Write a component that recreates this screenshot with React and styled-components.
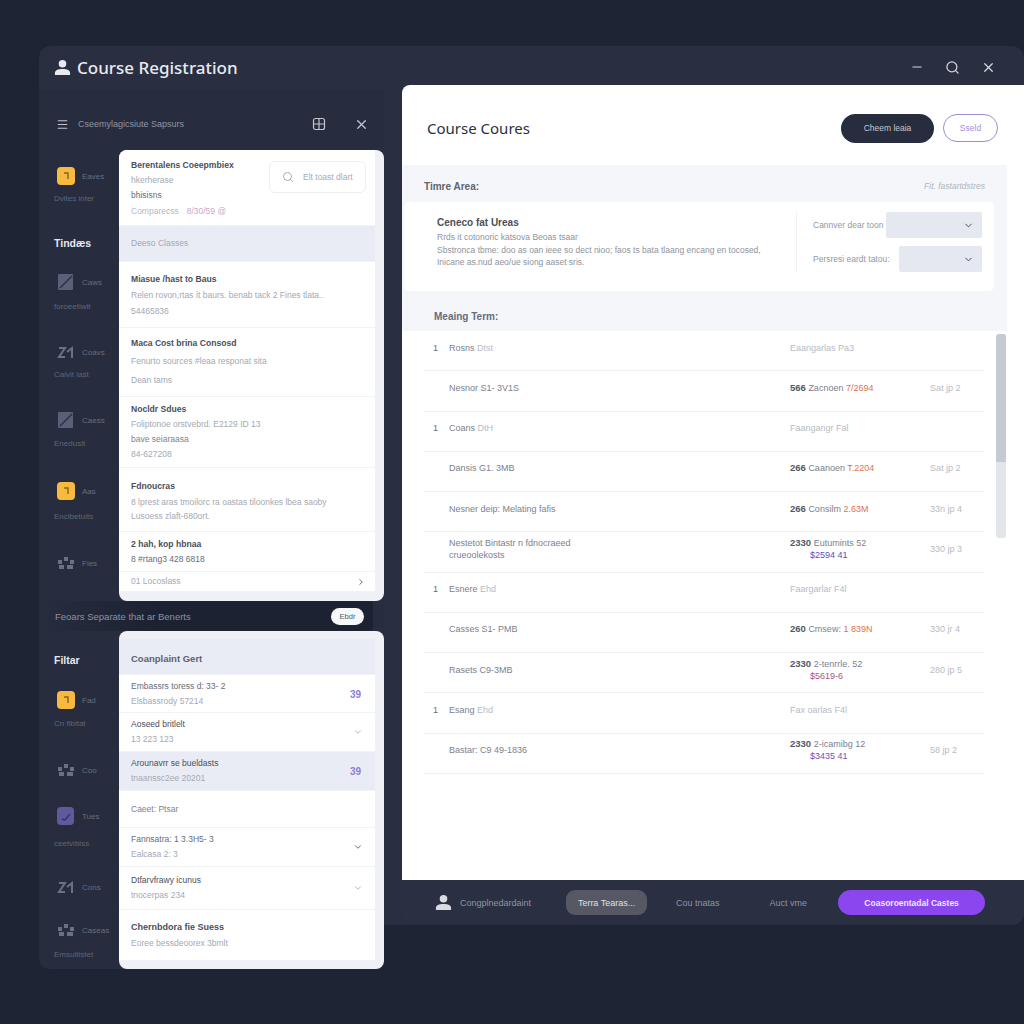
import React from "react";
import styled, { createGlobalStyle } from "styled-components";
import { ChevronDown, ChevronRight, Menu, Minus, Search, X } from "lucide-react";

const GlobalStyle = createGlobalStyle`
  html, body {
    margin: 0;
    background: #1f2434;
    font-family: "Liberation Sans", Arial, sans-serif;
  }
  * { box-sizing: border-box; }
`;

const Page = styled.div`
  width: 1024px;
  height: 1024px;
  padding: 46px 0 0 39px;
  overflow: hidden;
  background: #1f2434;
`;

const Header = styled.header`
  height: 44px;
  display: flex;
  align-items: center;
  padding: 0 28px 2px 15px;
  background: #292f41;
  border-radius: 12px 12px 0 0;
`;

const HeaderTitle = styled.h1`
  margin: 0 0 0 6px;
  flex: 1;
  font-family: "Noto Sans", sans-serif;
  font-size: 17px;
  font-weight: 500;
  color: #e8eaef;
`;

const HeaderTools = styled.div`
  display: flex;
  align-items: center;
  gap: 21px;
  color: #d5d8df;
`;

const Main = styled.div`
  display: flex;
  align-items: flex-start;
`;

/* left panel */
const Panel = styled.aside`
  width: 345px;
  height: 879px;
  flex: none;
  background: #272d3e;
  border-radius: 0 0 10px 10px;
`;

const PanelBar = styled.div`
  height: 60px;
  display: flex;
  align-items: center;
  padding: 8px 15px 0 17px;
  color: #c2c6cf;
`;

const PanelTitle = styled.span`
  flex: 1;
  margin-left: 9px;
  font-size: 9px;
  color: #8f95a4;
`;

const PanelTool = styled.span`
  display: flex;
  margin-left: 28px;
`;

const Section = styled.div`
  display: flex;
  height: ${(p) => p.$h}px;
`;

const Rail = styled.div`
  width: 80px;
  flex: none;
  padding-left: 15px;
`;

const RailHeading = styled.div`
  height: 14px;
  margin-top: ${(p) => p.$mt}px;
  font-size: 10.5px;
  line-height: 14px;
  font-weight: 700;
  color: #e6e8ee;
`;

const RailItem = styled.div`
  margin-top: ${(p) => p.$mt}px;
`;

const RailRow = styled.div`
  height: 18px;
  display: flex;
  align-items: center;
  gap: 7px;
  padding-left: 3px;
  font-size: 8px;
  color: #666d7e;
`;

const RailCaption = styled.div`
  height: 12px;
  margin-top: ${(p) => p.$gap}px;
  font-size: 8px;
  line-height: 12px;
  color: #5f6678;
`;

const Band = styled.div`
  width: 334px;
  height: 30px;
  display: flex;
  align-items: center;
  justify-content: space-between;
  padding: 0 9px 0 16px;
  background: linear-gradient(90deg, #272d3e 0%, #1d2232 35%, #1d2232 100%);
  border-radius: 0 4px 4px 0;
  font-size: 9.5px;
  color: #8b91a0;
`;

const BandButton = styled.button`
  width: 33px;
  height: 17px;
  padding: 0;
  border: 0;
  border-radius: 9px;
  background: #f7f8fa;
  color: #555b69;
  font: 7.5px "Liberation Sans", sans-serif;
`;

const Card = styled.div`
  width: 265px;
  height: ${(p) => p.$h}px;
  padding: ${(p) => p.$pad};
  background: #eff1f7;
  border-radius: 8px;
  overflow: hidden;
`;

const Row = styled.div`
  position: relative;
  height: ${(p) => p.$h}px;
  width: 256px;
  display: flex;
  flex-direction: column;
  justify-content: center;
  padding-left: 12px;
  background: ${(p) => (p.$tint ? "#e9ecf4" : "#fff")};
  border-bottom: 1px solid #f1f2f6;
`;

const CardTitle = styled.div`
  font-size: ${(p) => p.$size || 8.6}px;
  font-weight: 700;
  line-height: ${(p) => p.$lh || 15}px;
  color: #4a4f5c;
`;

const CardLine = styled.div`
  font-size: 8.5px;
  line-height: ${(p) => p.$lh || 15}px;
  color: ${(p) => p.$color || "#a3a9b4"};
`;

const SearchBox = styled.div`
  position: absolute;
  left: 150px;
  top: 11px;
  width: 97px;
  height: 32px;
  display: flex;
  align-items: center;
  gap: 9px;
  padding-left: 12px;
  background: #fff;
  border: 1px solid #eceef3;
  border-radius: 6px;
  font-size: 8.5px;
  color: #a5aab5;
`;

const PinkText = styled.span`
  margin-left: 8px;
  color: #c9a9c4;
`;

const BandTitle = styled.div`
  padding-top: 3px;
  font-size: 9.5px;
  font-weight: 700;
  color: #5c6270;
`;

const SideNote = styled.span`
  position: absolute;
  right: ${(p) => p.$right}px;
  top: 50%;
  transform: translateY(-50%);
  display: flex;
  color: #a5aab5;
  font-size: 10px;
  font-weight: 700;
`;

const PurpleNote = styled(SideNote)`
  color: #8f7dd6;
`;

/* right side */
const Right = styled.div`
  width: 640px;
  height: 840px;
  flex: none;
  margin-top: -5px;
  padding-left: 18px;
  background: #292f41;
  border-radius: 0 0 12px 0;
`;

const Sheet = styled.section`
  position: relative;
  height: 795px;
  background: #fff;
  border-radius: 8px 0 0 0;
`;

const SheetHead = styled.div`
  height: 80px;
  display: flex;
  align-items: center;
  padding: 6px 26px 0 25px;
`;

const SheetTitle = styled.h2`
  flex: 1;
  margin: 0;
  font-family: "Noto Sans", sans-serif;
  font-size: 15px;
  font-weight: 400;
  color: #2b3040;
`;

const DarkButton = styled.button`
  width: 93px;
  height: 29px;
  border: 0;
  border-radius: 15px;
  background: #272d3f;
  color: #c4c8d0;
  font: 8.5px "Liberation Sans", sans-serif;
`;

const OutlineButton = styled.button`
  width: 55px;
  height: 28px;
  margin-left: 9px;
  border: 1px solid #a08ad0;
  border-radius: 14px;
  background: #fff;
  color: #a88fd8;
  font: 8.5px "Liberation Sans", sans-serif;
`;

const Filters = styled.div`
  width: 605px;
  height: 166px;
  background: #f4f6fa;
`;

const FiltersHead = styled.div`
  height: 37px;
  display: flex;
  align-items: center;
  justify-content: space-between;
  padding: 5px 22px 0 22px;
`;

const FiltersLabel = styled.span`
  font-size: 10px;
  font-weight: 700;
  color: #5e6472;
`;

const FiltersHint = styled.span`
  font-size: 8.5px;
  font-style: italic;
  color: #aeb3bd;
`;

const FilterCard = styled.div`
  width: 590px;
  height: 89px;
  margin-left: 2px;
  display: flex;
  padding: 10px 12px 0 33px;
  background: #fff;
  border-radius: 5px;
`;

const FilterText = styled.div`
  width: 359px;
  flex: none;
  padding-top: 4px;
`;

const FilterTitle = styled.div`
  margin-bottom: 2px;
  font-size: 10px;
  font-weight: 700;
  line-height: 13px;
  color: #4a4f5c;
`;

const FilterLine = styled.div`
  font-size: 8.5px;
  line-height: 12.5px;
  white-space: nowrap;
  color: #8d93a0;
`;

const FilterForm = styled.div`
  flex: 1;
  height: 60px;
  display: flex;
  flex-direction: column;
  gap: 8px;
  padding-left: 16px;
  border-left: 1px solid #f0f1f5;
`;

const FormRow = styled.label`
  display: flex;
  align-items: center;
  justify-content: space-between;
  font-size: 8.5px;
  color: #9298a5;
`;

const SelectBox = styled.div`
  width: ${(p) => p.$w}px;
  height: 26px;
  display: flex;
  align-items: center;
  justify-content: flex-end;
  padding-right: 8px;
  background: #e5e8f1;
  border-radius: 2px;
  color: #3c4250;
`;

const MeetingHead = styled.div`
  height: 40px;
  padding: 20px 0 0 32px;
  font-size: 10px;
  line-height: 12px;
  font-weight: 700;
  color: #666c7a;
`;

const Table = styled.div`
  width: 560px;
  margin-left: 22px;
`;

const TableRow = styled.div`
  height: 40.27px;
  display: grid;
  grid-template-columns: 25px 341px 140px 1fr;
  align-items: center;
  padding-bottom: 6px;
  border-bottom: 1px solid #eef0f3;
  font-size: 9px;
  line-height: 12px;
  color: #7b818e;
`;

const RowNumber = styled.span`
  padding-left: 9px;
  color: #666c7a;
`;

const Faint = styled.span`
  color: #b7bbc4;
`;

const Amount = styled.b`
  color: #525865;
  font-size: 9.5px;
`;

const Price = styled.span`
  color: #e0714f;
`;

const SubPrice = styled.div`
  padding-left: 20px;
  color: ${(p) => p.$color};
`;

const Scrollbar = styled.div`
  position: absolute;
  left: 594px;
  top: 249px;
  width: 10px;
  height: 204px;
  background: #e2e5ea;
  border-radius: 3px;
  overflow: hidden;
`;

const ScrollThumb = styled.div`
  height: 128px;
  background: #c6cad2;
`;

const Footer = styled.footer`
  height: 45px;
  display: flex;
  align-items: center;
  padding-left: 33px;
  background: #2a3042;
  border-radius: 0 0 12px 12px;
  font-size: 9px;
  color: #8e94a2;
`;

const FooterText = styled.span`
  margin-left: ${(p) => p.$ml}px;
  white-space: nowrap;
`;

const FooterPill = styled.span`
  width: 81px;
  height: 25px;
  margin-left: 35px;
  display: flex;
  align-items: center;
  justify-content: center;
  background: #565964;
  border-radius: 9px;
  color: #dfe1e6;
`;

const FooterButton = styled.button`
  width: 147px;
  height: 25px;
  margin-left: 31px;
  border: 0;
  border-radius: 13px;
  background: #8b46f0;
  color: #eee6fb;
  font: 700 8.5px "Liberation Sans", sans-serif;
`;

function PersonIcon({ size, color }) {
  return (
    <svg width={size} height={size} viewBox="0 0 18 18" fill={color}>
      <circle cx="9" cy="5" r="4" />
      <path d="M1 17v-2.5C1 12 4 10.5 9 10.5s8 1.5 8 4V17z" />
    </svg>
  );
}

function GridIcon() {
  return (
    <svg width="14" height="14" viewBox="0 0 14 14" fill="none" stroke="currentColor" strokeWidth="1.2">
      <rect x="1.5" y="1.5" width="11" height="11" rx="2" />
      <path d="M7 1.5v11M1.5 7h11" />
    </svg>
  );
}

// small drawings used in the left rail
function RailIcon({ kind }) {
  if (kind === "yellow") {
    return (
      <svg width="18" height="18" viewBox="0 0 18 18">
        <rect width="18" height="18" rx="4" fill="#f7b93e" />
        <path d="M7 6h4v6" fill="none" stroke="#8a6420" strokeWidth="1.4" />
      </svg>
    );
  }
  if (kind === "slate") {
    return (
      <svg width="18" height="18" viewBox="0 0 18 18">
        <rect x="1" y="1" width="15" height="16" rx="1" fill="#596077" />
        <path d="M3 15 15 3" stroke="#2c3245" strokeWidth="1.6" />
      </svg>
    );
  }
  if (kind === "violet") {
    return (
      <svg width="18" height="18" viewBox="0 0 18 18">
        <rect width="17" height="18" rx="4" fill="#5f5a9e" />
        <path d="M5 12l3 1 5-6" fill="none" stroke="#35306a" strokeWidth="1.4" />
      </svg>
    );
  }
  if (kind === "zig") {
    return (
      <svg width="18" height="18" viewBox="0 0 18 18" fill="none" stroke="#6b7183" strokeWidth="2">
        <path d="M2 5h6L2 14h6M10 9l5-4v10" />
      </svg>
    );
  }
  return (
    <svg width="18" height="18" viewBox="0 0 18 18" fill="#6b7183">
      <rect x="1" y="6" width="4" height="4" />
      <rect x="7" y="3" width="4" height="4" />
      <rect x="13" y="6" width="4" height="4" />
      <rect x="2" y="11" width="5" height="4" />
      <rect x="10" y="11" width="6" height="4" />
    </svg>
  );
}

const rail1 = [
  { heading: false, kind: "yellow", label: "Eaves", caption: "Dvites inter", mt: 17, gap: 8 },
  { heading: true, label: "Tindæs", mt: 31 },
  { kind: "slate", label: "Caws", caption: "foroeetiwit", mt: 23, gap: 10 },
  { kind: "zig", label: "Coavs", caption: "Calvit last", mt: 30, gap: 8 },
  { kind: "slate", label: "Caess", caption: "Enedusit", mt: 30, gap: 9 },
  { kind: "yellow", label: "Aas", caption: "Encibetuits", mt: 32, gap: 11 },
  { kind: "dots", label: "Fies", mt: 31 },
];

const rail2 = [
  { heading: true, label: "Filtar", mt: 22 },
  { kind: "yellow", label: "Fad", caption: "Cn fibitat", mt: 24, gap: 9 },
  { kind: "dots", label: "Coo", mt: 31 },
  { kind: "violet", label: "Tues", caption: "ceetvibiss", mt: 28, gap: 13 },
  { kind: "zig", label: "Cons", mt: 28 },
  { kind: "dots", label: "Caseas", caption: "Emsuitistet", mt: 25, gap: 10 },
];

function RailList({ items }) {
  return (
    <Rail>
      {items.map((item) =>
        item.heading ? (
          <RailHeading key={item.label} $mt={item.mt}>{item.label}</RailHeading>
        ) : (
          <RailItem key={item.label + item.mt} $mt={item.mt}>
            <RailRow>
              <RailIcon kind={item.kind} />
              {item.label}
            </RailRow>
            {item.caption && <RailCaption $gap={item.gap}>{item.caption}</RailCaption>}
          </RailItem>
        )
      )}
    </Rail>
  );
}

const tableRows = [
  { group: true, name: "Rosns", faint: "Dtst", col: "Eaangarlas Pa3" },
  { name: "Nesnor S1- 3V1S", qty: "566", word: "Zacnoen", price: "7/2694", end: "Sat jp  2" },
  { group: true, name: "Coans", faint: "DtH", col: "Faangangr Fal" },
  { name: "Dansis G1. 3MB", qty: "266", word: "Caanoen", price: "T.2204", end: "Sat jp  2" },
  { name: "Nesner deip: Melating fafis", qty: "266", word: "Consilm", price: "2.63M", end: "33n jp  4" },
  { name: "Nestetot Bintastr n fdnocraeed", name2: "crueoolekosts", qty: "2330", word: "Eutumints  52", sub: "$2594 41", subColor: "#5a4fc4", end: "330 jp  3" },
  { group: true, name: "Esnere", faint: "Ehd", col: "Faargarlar F4l" },
  { name: "Casses S1- PMB", qty: "260", word: "Cmsew:", price: "1 839N", end: "330 jr  4" },
  { name: "Rasets C9-3MB", qty: "2330", word: "2-tenrrle.  52", sub: "$5619-6", subColor: "#a8557f", end: "280 jp  5" },
  { group: true, name: "Esang", faint: "Ehd", col: "Fax oarlas F4l" },
  { name: "Bastar: C9 49-1836", qty: "2330", word: "2-icamibg  12", sub: "$3435 41", subColor: "#7a4fb4", end: "58 jp  2" },
];

function TableRows() {
  return (
    <Table>
      {tableRows.map((row) =>
        row.group ? (
          <TableRow key={row.name}>
            <RowNumber>1</RowNumber>
            <span>
              {row.name} <Faint>{row.faint}</Faint>
            </span>
            <Faint>{row.col}</Faint>
          </TableRow>
        ) : (
          <TableRow key={row.name}>
            <span />
            <span>
              {row.name}
              {row.name2 && <div>{row.name2}</div>}
            </span>
            <span>
              <Amount>{row.qty}</Amount> {row.word} {row.price && <Price>{row.price}</Price>}
              {row.sub && <SubPrice $color={row.subColor}>{row.sub}</SubPrice>}
            </span>
            <Faint>{row.end}</Faint>
          </TableRow>
        )
      )}
    </Table>
  );
}

export default function App() {
  return (
    <Page>
      <GlobalStyle />
      <Header>
        <PersonIcon size={17} color="#e8eaef" />
        <HeaderTitle>Course Registration</HeaderTitle>
        <HeaderTools>
          <Minus size={14} />
          <Search size={15} />
          <X size={15} />
        </HeaderTools>
      </Header>
      <Main>
        <Panel>
          <PanelBar>
            <Menu size={13} />
            <PanelTitle>Cseemylagicsiute Sapsurs</PanelTitle>
            <PanelTool><GridIcon /></PanelTool>
            <PanelTool><X size={15} /></PanelTool>
          </PanelBar>
          <Section $h={451}>
            <RailList items={rail1} />
            <Card $h={451} $pad="0 0 9px 0">
              <Row $h={76}>
                <CardTitle $lh={16}>Berentalens Coeepmbiex</CardTitle>
                <CardLine $lh={15}>hkerherase</CardLine>
                <CardLine $lh={15} $color="#666c7a">bhisisns</CardLine>
                <CardLine $lh={16} $color="#b4b9c3">Comparecss<PinkText>8/30/59 @</PinkText></CardLine>
                <SearchBox>
                  <Search size={12} />
                  Elt toast dlart
                </SearchBox>
              </Row>
              <Row $h={36} $tint>
                <CardLine>Deeso Classes</CardLine>
              </Row>
              <Row $h={66}>
                <CardTitle $lh={16}>Miasue /hast to Baus</CardTitle>
                <CardLine $lh={16}>Relen rovon,rtas ít baurs. benab tack 2 Fines tlata..</CardLine>
                <CardLine $lh={16}>54465836</CardLine>
              </Row>
              <Row $h={69}>
                <CardTitle $lh={17}>Maca Cost brina Consosd</CardTitle>
                <CardLine $lh={19}>Fenurto sources #leaa responat sita</CardLine>
                <CardLine $lh={19}>Dean tams</CardLine>
              </Row>
              <Row $h={71}>
                <CardTitle>Nocldr Sdues</CardTitle>
                <CardLine>Foliptonoe orstvebrd. E2129 ID 13</CardLine>
                <CardLine $color="#7d8390">bave seiaraasa</CardLine>
                <CardLine>84-627208</CardLine>
              </Row>
              <Row $h={64}>
                <CardTitle $lh={18}>Fdnoucras</CardTitle>
                <CardLine $lh={15}>8 lprest aras tmoilorc ra oastas tiloonkes lbea saoby</CardLine>
                <CardLine $lh={13}>Lusoess zlaft-680ort.</CardLine>
              </Row>
              <Row $h={40}>
                <CardTitle>2 hah, kop hbnaa</CardTitle>
                <CardLine $color="#666c7a">8 #rtang3 428 6818</CardLine>
              </Row>
              <Row $h={20}>
                <CardLine>01 Locoslass</CardLine>
                <SideNote $right={9}><ChevronRight size={10} color="#4a505d" /></SideNote>
              </Row>
            </Card>
          </Section>
          <Band>
            Feoars Separate that ar Benerts
            <BandButton>Ebdr</BandButton>
          </Band>
          <Section $h={338}>
            <RailList items={rail2} />
            <Card $h={338} $pad="8px 0 8px 0">
              <Row $h={36} $tint>
                <BandTitle>Coanplaint Gert</BandTitle>
              </Row>
              <Row $h={38}>
                <CardLine $color="#666c7a">Embassrs toress d: 33- 2</CardLine>
                <CardLine>Elsbassrody 57214</CardLine>
                <PurpleNote $right={14}>39</PurpleNote>
              </Row>
              <Row $h={39}>
                <CardLine $color="#4a4f5c">Aoseed britlelt</CardLine>
                <CardLine>13 223 123</CardLine>
                <SideNote $right={12}><ChevronDown size={10} /></SideNote>
              </Row>
              <Row $h={39} $tint>
                <CardLine $color="#4a4f5c">Arounavrr se bueldasts</CardLine>
                <CardLine>tnaanssc2ee 20201</CardLine>
                <PurpleNote $right={14}>39</PurpleNote>
              </Row>
              <Row $h={37}>
                <CardLine $color="#7d8390">Caeet: Ptsar</CardLine>
              </Row>
              <Row $h={39}>
                <CardLine $color="#666c7a">Fannsatra: 1 3.3H5- 3</CardLine>
                <CardLine>Ealcasa 2: 3</CardLine>
                <SideNote $right={12}><ChevronDown size={10} color="#4a505d" /></SideNote>
              </Row>
              <Row $h={43}>
                <CardLine $color="#4a4f5c">Dtfarvfrawy icunus</CardLine>
                <CardLine>tnocerpas 234</CardLine>
                <SideNote $right={12}><ChevronDown size={10} /></SideNote>
              </Row>
              <Row $h={51}>
                <CardTitle $size={9}>Chernbdora fie Suess</CardTitle>
                <CardLine $lh={16}>Eoree bessdeoorex 3bmlt</CardLine>
              </Row>
            </Card>
          </Section>
        </Panel>
        <Right>
          <Sheet>
            <SheetHead>
              <SheetTitle>Course Coures</SheetTitle>
              <DarkButton>Cheem leaia</DarkButton>
              <OutlineButton>Sseld</OutlineButton>
            </SheetHead>
            <Filters>
              <FiltersHead>
                <FiltersLabel>Timre Area:</FiltersLabel>
                <FiltersHint>Fit.   fastartdstres</FiltersHint>
              </FiltersHead>
              <FilterCard>
                <FilterText>
                  <FilterTitle>Ceneco fat Ureas</FilterTitle>
                  <FilterLine>Rrds it cotonoric katsova Beoas tsaar</FilterLine>
                  <FilterLine>Sbstronca tbme: doo as oan ieee so dect nioo; faos ts bata tlaang encang en tocosed,</FilterLine>
                  <FilterLine>Inicane as.nud aeo/ue siong aaset sris.</FilterLine>
                </FilterText>
                <FilterForm>
                  <FormRow>
                    Cannver dear toon
                    <SelectBox $w={96}><ChevronDown size={11} /></SelectBox>
                  </FormRow>
                  <FormRow>
                    Persresi eardt tatou:
                    <SelectBox $w={83}><ChevronDown size={11} /></SelectBox>
                  </FormRow>
                </FilterForm>
              </FilterCard>
              <MeetingHead>Meaing Term:</MeetingHead>
            </Filters>
            <TableRows />
            <Scrollbar><ScrollThumb /></Scrollbar>
          </Sheet>
          <Footer>
            <PersonIcon size={17} color="#d8dbe2" />
            <FooterText $ml={8}>Congplnedardaint</FooterText>
            <FooterPill>Terra Tearas...</FooterPill>
            <FooterText $ml={29}>Cou tnatas</FooterText>
            <FooterText $ml={50}>Auct vme</FooterText>
            <FooterButton>Coasoroentadal Castes</FooterButton>
          </Footer>
        </Right>
      </Main>
    </Page>
  );
}
